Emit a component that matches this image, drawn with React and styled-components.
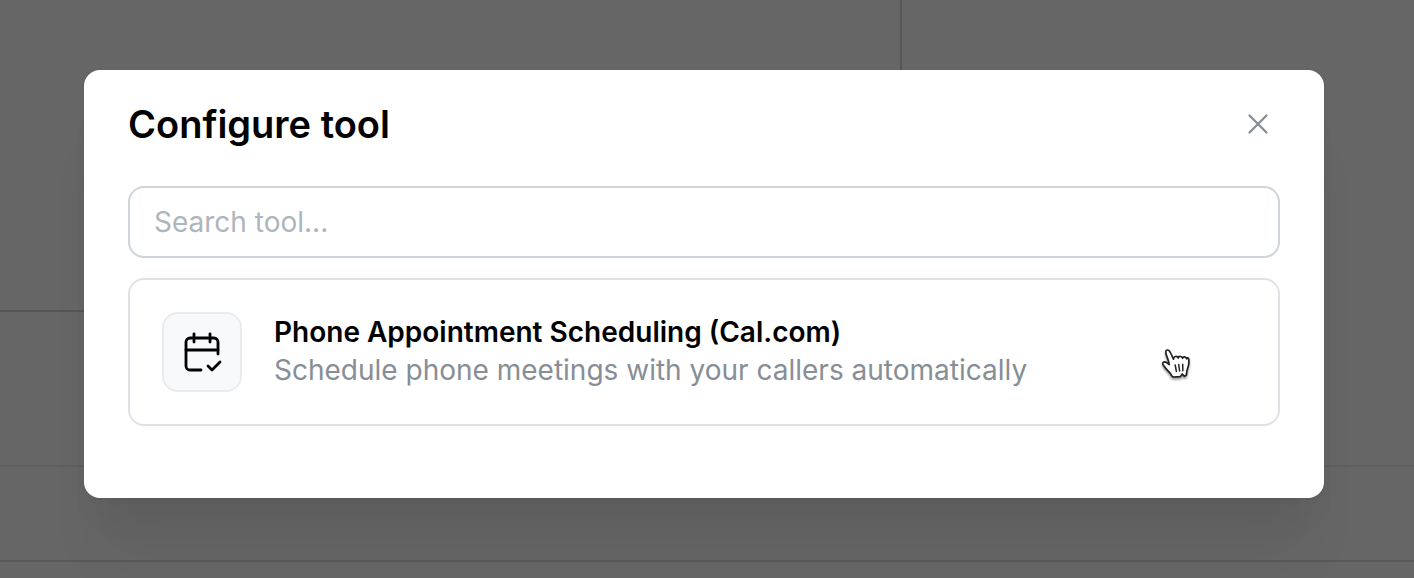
import React from 'react';
import styled, { createGlobalStyle } from 'styled-components';
import { TbCalendarCheck } from 'react-icons/tb';

const tools = [
  {
    id: 'cal-phone',
    name: 'Phone Appointment Scheduling (Cal.com)',
    description: 'Schedule phone meetings with your callers automatically',
    icon: TbCalendarCheck,
  },
];

const CloseIcon = () => (
  <svg width="32" height="32" viewBox="0 0 32 32" fill="none" aria-hidden="true">
    <path d="M7.5 7.5l17 17M24.5 7.5l-17 17" stroke="currentColor" strokeWidth="2.3" strokeLinecap="round" />
  </svg>
);

const HandCursor = () => (
  <Pointer width="36" height="38" viewBox="0 0 36 38" aria-hidden="true">
    <path
      d="M13.500 31.500C12.500 28.500 9.500 27 7.500 24C6.700 22.500 5.600 21.800 4.900 20.300C4.200 18.300 6.500 17.100 8.500 18.500L11.300 20.600C10.800 17 9.500 14.300 8.300 10.800C7.300 7.800 7.800 6.200 9.300 6C11 5.800 12 7.500 12.800 9.500L15.500 15.200C15.500 12 19.200 11.500 20.200 14C20.500 11.700 23.900 11.700 24.600 14.300C25.300 12.300 27.900 12.500 28.700 14.800C29.800 12.500 31 14.500 30.900 17.200C30.900 20.500 30.500 22.500 29.600 24.500C28.700 26.500 28.500 28.300 28.400 31L26.300 32.300L24.300 30L22.300 32.600L15 33Z"
      fill="#fff"
      stroke="#222"
      strokeWidth="1.7"
      strokeLinejoin="round"
    />
    <path d="M17.200 21l1.200 6.500M20.700 20.500l.9 6.500M24.700 20.300l.1 6.500" stroke="#222" strokeWidth="1.500" strokeLinecap="round" />
  </Pointer>
);

export default function App() {
  return (
    <>
      <GlobalStyle />
      <Page>
        <PageTop>
          <PagePane />
          <div />
        </PageTop>
        <PageRow />
        <PageRow $dark />
        <Overlay>
          <Modal role="dialog" aria-modal="true" aria-labelledby="modal-title">
            <ModalHeader>
              <ModalTitle id="modal-title">Configure tool</ModalTitle>
              <CloseButton type="button" aria-label="Close">
                <CloseIcon />
              </CloseButton>
            </ModalHeader>
            <SearchInput type="text" placeholder="Search tool..." aria-label="Search tool" />
            {tools.map(({ id, name, description, icon: Icon }) => (
              <ToolCard key={id} type="button">
                <ToolIcon>
                  <Icon size={48} strokeWidth={1.4} aria-hidden="true" />
                </ToolIcon>
                <ToolText>
                  <ToolName>{name}</ToolName>
                  <ToolDescription>{description}</ToolDescription>
                </ToolText>
                <HandCursor />
              </ToolCard>
            ))}
          </Modal>
        </Overlay>
      </Page>
    </>
  );
}

const GlobalStyle = createGlobalStyle`
  *, *::before, *::after {
    box-sizing: border-box;
  }
  body {
    margin: 0;
    background: #666;
    font-family: Inter, 'Liberation Sans', sans-serif;
  }
`

const Page = styled.div`
  position: relative;
  min-height: 100vh;
  display: flex;
  flex-direction: column;
  background: #666;
`

const PageTop = styled.div`
  display: grid;
  grid-template-columns: 902fr 512fr;
  height: 312px;
`

const PagePane = styled.div`
  border-right: 2px solid #565656;
  border-bottom: 2px solid #565656;
`

const PageRow = styled.div`
  height: ${props => props.$dark ? '95px' : '155px'};
  border-bottom: 2px solid ${props => props.$dark ? '#595959' : '#5e5e5e'};
`

const Overlay = styled.div`
  position: absolute;
  inset: 0;
  display: flex;
  align-items: flex-start;
  justify-content: center;
  padding: 70px 90px 0 84px;
`

const Modal = styled.section`
  flex: 1;
  display: flex;
  flex-direction: column;
  padding: 32px 44px 72px;
  border-radius: 16px;
  background: #fff;
  box-shadow:
    0 2px 6px rgba(0, 0, 0, 0.05),
    0 72px 56px -14px rgba(0, 0, 0, 0.05),
    0 34px 34px -14px rgba(0, 0, 0, 0.04);
`

const ModalHeader = styled.header`
  display: flex;
  align-items: center;
  justify-content: space-between;
  height: 44px;
  margin-bottom: 40px;
`

const ModalTitle = styled.h2`
  margin: 0;
  color: #000;
  font-size: 38px;
  font-weight: 600;
  line-height: 60px;
`

const CloseButton = styled.button`
  display: flex;
  align-items: center;
  justify-content: center;
  width: 44px;
  height: 44px;
  padding: 0;
  border: 0;
  background: none;
  color: #868e96;
  cursor: pointer;
`

const SearchInput = styled.input`
  width: 100%;
  height: 72px;
  margin-bottom: 20px;
  padding: 0 24px;
  border: 2px solid #ced4da;
  border-radius: 16px;
  background: #fff;
  font-family: inherit;
  font-size: 28px;
  outline: none;

  &::placeholder {
    color: #adb5bd;
    opacity: 1;
  }
`

const ToolCard = styled.button`
  position: relative;
  display: flex;
  align-items: center;
  gap: 32px;
  width: 100%;
  padding: 32px;
  border: 2px solid #dee2e6;
  border-radius: 16px;
  background: #fff;
  font-family: inherit;
  text-align: left;
  cursor: pointer;
`

const ToolIcon = styled.span`
  display: flex;
  flex: none;
  align-items: center;
  justify-content: center;
  width: 80px;
  height: 80px;
  border: 2px solid #e9ecef;
  border-radius: 16px;
  background: #f8f9fa;
  color: #000;
`

const ToolText = styled.span`
  display: flex;
  flex-direction: column;
  padding-bottom: 2px;
`

const ToolName = styled.span`
  color: #000;
  font-size: 28px;
  font-weight: 600;
  line-height: 38px;
`

const ToolDescription = styled.span`
  color: #868e96;
  font-size: 28px;
  line-height: 38px;
`

const Pointer = styled.svg`
  position: absolute;
  top: 64px;
  right: 84px;
  fill: none;
  filter: drop-shadow(0 2px 1px rgba(0, 0, 0, 0.4));
`
